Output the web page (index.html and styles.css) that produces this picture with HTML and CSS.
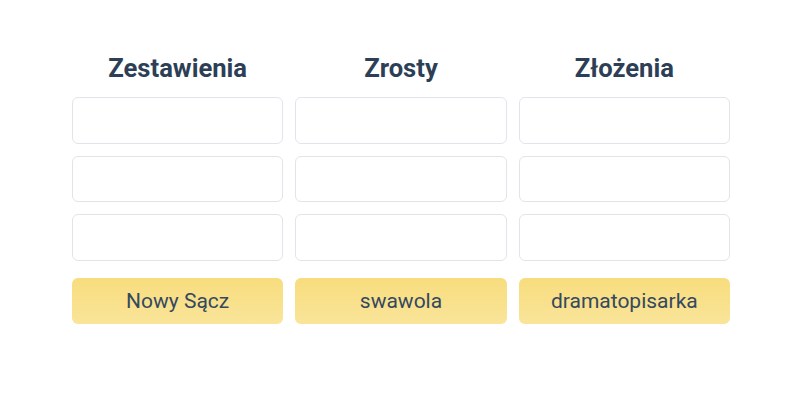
FILE: index.html
```html
<!DOCTYPE html>
<html lang="pl">
<head>
<meta charset="utf-8">
<link rel="stylesheet" href="styles.css">
</head>
<body>
<div class="board">
  <div class="column">
    <h2 class="title">Zestawienia</h2>
    <div class="slot"></div>
    <div class="slot"></div>
    <div class="slot"></div>
    <div class="word">Nowy Sącz</div>
  </div>
  <div class="column">
    <h2 class="title">Zrosty</h2>
    <div class="slot"></div>
    <div class="slot"></div>
    <div class="slot"></div>
    <div class="word">swawola</div>
  </div>
  <div class="column">
    <h2 class="title">Złożenia</h2>
    <div class="slot"></div>
    <div class="slot"></div>
    <div class="slot"></div>
    <div class="word">dramatopisarka</div>
  </div>
</div>
</body>
</html>
```

FILE: styles.css
```css
html, body {
  margin: 0;
  padding: 0;
  background: #ffffff;
  font-family: Roboto, "Liberation Sans", sans-serif;
}
.board {
  display: grid;
  grid-template-columns: repeat(3, 1fr);
  column-gap: 12px;
  width: 658px;
  padding: 53px 0 0 72px;
}
.column {
  display: flex;
  flex-direction: column;
}
.title {
  margin: 0 0 14px 0;
  height: 30px;
  line-height: 30px;
  text-align: center;
  font-size: 25.6px;
  font-weight: 700;
  color: #2c3f56;
}
.slot {
  box-sizing: border-box;
  height: 46.5px;
  margin-bottom: 12px;
  border: 1px solid #e1e5ea;
  border-radius: 6px;
  background: #ffffff;
}
.word {
  box-sizing: border-box;
  height: 46.5px;
  margin-top: 5px;
  border-radius: 6px;
  background: linear-gradient(to bottom, #f8dd7e, #f9e499);
  display: flex;
  align-items: center;
  justify-content: center;
  font-size: 21px;
  color: #34495e;
}
```
